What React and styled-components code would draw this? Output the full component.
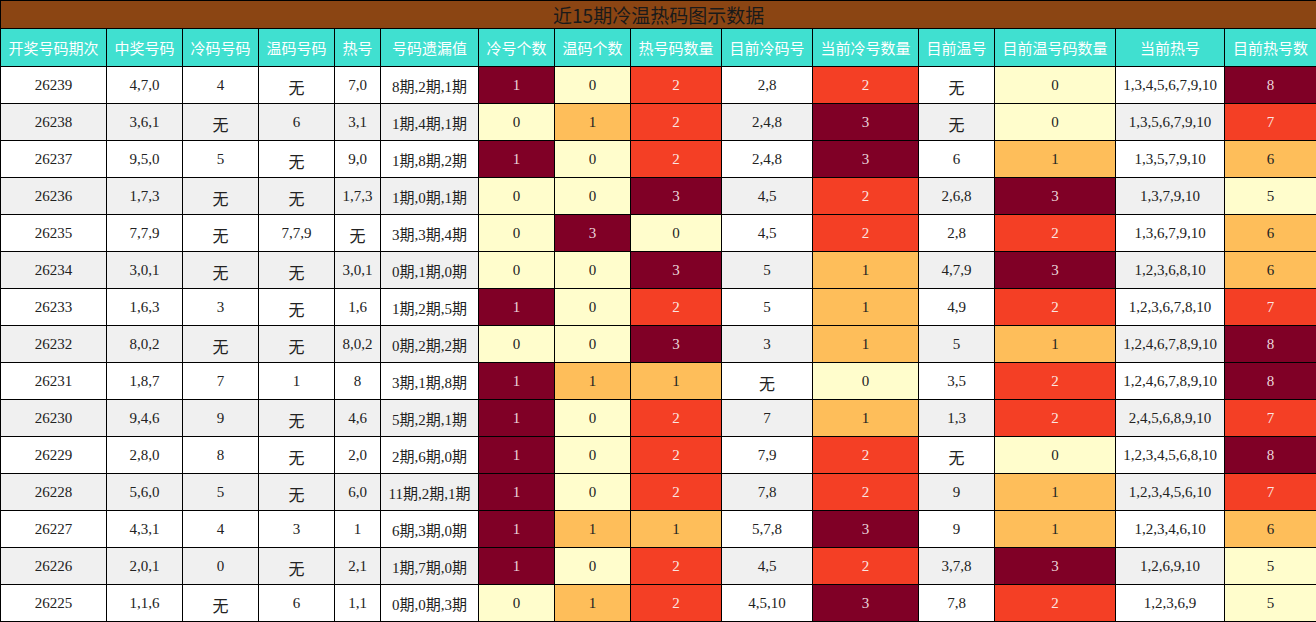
import React from "react";
import styled, { createGlobalStyle } from "styled-components";

const Global = createGlobalStyle`
  html, body { margin: 0; padding: 0; background: #fff; }
  body { font-family: "Liberation Serif", "Noto Sans CJK SC", serif; }
`;

const COLORS = {
  y: { bg: "#fffdcc", fg: "#222" },
  o: { bg: "#febe5a", fg: "#222" },
  r: { bg: "#f43f25", fg: "#fbe6e2" },
  d: { bg: "#800026", fg: "#ead6da" },
};

const Table = styled.table`
  width: 1316px;
  table-layout: fixed;
  border-collapse: collapse;
  font-family: "Liberation Serif", "Noto Sans CJK SC", serif;
  font-size: 15px;
  color: #222;
`;

const TitleRow = styled.tr`
  height: 28px;
`;

const TitleCell = styled.th`
  background: #8b4513;
  border: 1px solid #000;
  padding: 0;
  font-family: "Noto Sans CJK SC", sans-serif;
  font-weight: normal;
  font-size: 19px;
  line-height: 26px;
  color: #1a1a1a;
  text-align: center;
`;

const HeadRow = styled.tr`
  height: 38px;
`;

const HeadCell = styled.th`
  background: #40e0d0;
  border: 1px solid #000;
  padding: 0;
  font-family: "Noto Sans CJK SC", sans-serif;
  font-weight: normal;
  font-size: 15px;
  color: #fff;
  text-align: center;
  white-space: nowrap;
  overflow: hidden;
`;

const Row = styled.tr`
  height: 37px;
  background: ${(p) => (p.$alt ? "#f0f0f0" : "#fff")};
`;

const Cell = styled.td`
  border: 1px solid #000;
  padding: 0;
  text-align: center;
  white-space: nowrap;
  overflow: hidden;
  background: ${(p) => (p.$tone ? COLORS[p.$tone].bg : "transparent")};
  color: ${(p) => (p.$tone ? COLORS[p.$tone].fg : "#222")};
`;

const Wu = styled.span`
  font-family: "Noto Sans CJK SC", sans-serif;
  font-size: 16px;
  position: relative;
  top: 2px;
`;

const widths = [106, 76, 76, 76, 46, 98, 76, 76, 91, 91, 106, 76, 121, 109, 92];

const headers = [
  "开奖号码期次", "中奖号码", "冷码号码", "温码号码", "热号", "号码遗漏值",
  "冷号个数", "温码个数", "热号码数量", "目前冷码号", "当前冷号数量",
  "目前温号", "目前温号码数量", "当前热号", "目前热号数",
];

// value|tone for colored columns
const rows = [
  ["26239", "4,7,0", "4", "无", "7,0", "8期,2期,1期", "1d", "0y", "2r", "2,8", "2r", "无", "0y", "1,3,4,5,6,7,9,10", "8d"],
  ["26238", "3,6,1", "无", "6", "3,1", "1期,4期,1期", "0y", "1o", "2r", "2,4,8", "3d", "无", "0y", "1,3,5,6,7,9,10", "7r"],
  ["26237", "9,5,0", "5", "无", "9,0", "1期,8期,2期", "1d", "0y", "2r", "2,4,8", "3d", "6", "1o", "1,3,5,7,9,10", "6o"],
  ["26236", "1,7,3", "无", "无", "1,7,3", "1期,0期,1期", "0y", "0y", "3d", "4,5", "2r", "2,6,8", "3d", "1,3,7,9,10", "5y"],
  ["26235", "7,7,9", "无", "7,7,9", "无", "3期,3期,4期", "0y", "3d", "0y", "4,5", "2r", "2,8", "2r", "1,3,6,7,9,10", "6o"],
  ["26234", "3,0,1", "无", "无", "3,0,1", "0期,1期,0期", "0y", "0y", "3d", "5", "1o", "4,7,9", "3d", "1,2,3,6,8,10", "6o"],
  ["26233", "1,6,3", "3", "无", "1,6", "1期,2期,5期", "1d", "0y", "2r", "5", "1o", "4,9", "2r", "1,2,3,6,7,8,10", "7r"],
  ["26232", "8,0,2", "无", "无", "8,0,2", "0期,2期,2期", "0y", "0y", "3d", "3", "1o", "5", "1o", "1,2,4,6,7,8,9,10", "8d"],
  ["26231", "1,8,7", "7", "1", "8", "3期,1期,8期", "1d", "1o", "1o", "无", "0y", "3,5", "2r", "1,2,4,6,7,8,9,10", "8d"],
  ["26230", "9,4,6", "9", "无", "4,6", "5期,2期,1期", "1d", "0y", "2r", "7", "1o", "1,3", "2r", "2,4,5,6,8,9,10", "7r"],
  ["26229", "2,8,0", "8", "无", "2,0", "2期,6期,0期", "1d", "0y", "2r", "7,9", "2r", "无", "0y", "1,2,3,4,5,6,8,10", "8d"],
  ["26228", "5,6,0", "5", "无", "6,0", "11期,2期,1期", "1d", "0y", "2r", "7,8", "2r", "9", "1o", "1,2,3,4,5,6,10", "7r"],
  ["26227", "4,3,1", "4", "3", "1", "6期,3期,0期", "1d", "1o", "1o", "5,7,8", "3d", "9", "1o", "1,2,3,4,6,10", "6o"],
  ["26226", "2,0,1", "0", "无", "2,1", "1期,7期,0期", "1d", "0y", "2r", "4,5", "2r", "3,7,8", "3d", "1,2,6,9,10", "5y"],
  ["26225", "1,1,6", "无", "6", "1,1", "0期,0期,3期", "0y", "1o", "2r", "4,5,10", "3d", "7,8", "2r", "1,2,3,6,9", "5y"],
];

const toneCols = new Set([6, 7, 8, 10, 12, 14]);

function renderCell(v, ci) {
  if (toneCols.has(ci)) {
    const tone = v.slice(-1);
    return (
      <Cell key={ci} $tone={tone}>
        {v.slice(0, -1)}
      </Cell>
    );
  }
  return <Cell key={ci}>{v === "无" ? <Wu>无</Wu> : v}</Cell>;
}

export default function App() {
  return (
    <>
      <Global />
      <Table>
        <colgroup>
          {widths.map((w, i) => (
            <col key={i} style={{ width: w }} />
          ))}
        </colgroup>
        <thead>
          <TitleRow>
            <TitleCell colSpan={15}>近15期冷温热码图示数据</TitleCell>
          </TitleRow>
          <HeadRow>
            {headers.map((h) => (
              <HeadCell key={h}>{h}</HeadCell>
            ))}
          </HeadRow>
        </thead>
        <tbody>
          {rows.map((r, ri) => (
            <Row key={r[0]} $alt={ri % 2 === 1}>
              {r.map((v, ci) => renderCell(v, ci))}
            </Row>
          ))}
        </tbody>
      </Table>
    </>
  );
}
